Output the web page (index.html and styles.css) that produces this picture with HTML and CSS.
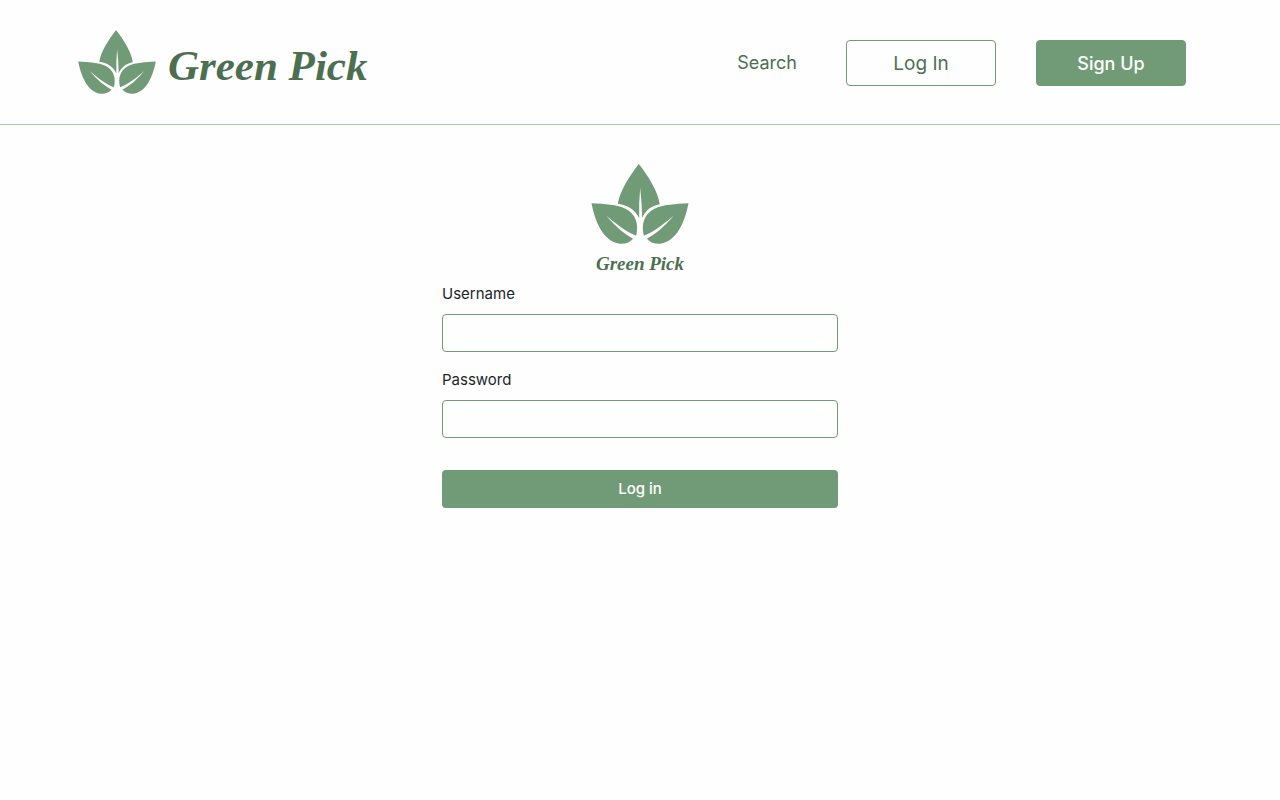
FILE: index.html
```html
<!DOCTYPE html>
<html lang="en">
<head>
<meta charset="utf-8">
<meta name="viewport" content="width=device-width, initial-scale=1">
<title>Green Pick</title>
<link rel="stylesheet" href="styles.css">
</head>
<body>
<svg class="symbols" aria-hidden="true">
  <symbol id="leaves" viewBox="36 26 291 240">
    <path d="M178 26C150 62 122 105 115 145C145 149 167 163 179 188Q178 140 182 98Q187 140 188 188C198 165 215 152 241 147C234 105 206 62 178 26Z"/>
    <path d="M36 144C75 146 113 148 138 160C168 175 179 205 170 241C140 230 112 208 79 180C106 212 134 236 161 250C150 262 136 266 122 265C80 262 50 215 36 144Z"/>
    <path d="M327 144C288 146 250 148 225 160C195 175 184 205 193 241C223 230 251 208 284 180C257 212 229 236 202 250C213 262 227 266 241 265C283 262 313 215 327 144Z"/>
  </symbol>
</svg>
<header class="header">
  <a class="brand" href="#">
    <svg class="brand-leaves" aria-hidden="true"><use href="#leaves"/></svg>
    <span class="brand-name">Green Pick</span>
  </a>
  <nav class="nav">
    <a class="nav-link" href="#">Search</a>
    <button class="button button-outline" type="button">Log In</button>
    <button class="button button-solid" type="button">Sign Up</button>
  </nav>
</header>
<main class="main">
  <form class="login">
    <div class="login-logo">
      <svg class="login-leaves" aria-hidden="true"><use href="#leaves"/></svg>
      <span class="login-name">Green Pick</span>
    </div>
    <label class="label" for="username">Username</label>
    <input class="input" id="username" type="text">
    <label class="label" for="password">Password</label>
    <input class="input" id="password" type="password">
    <button class="submit" type="submit">Log in</button>
  </form>
</main>
</body>
</html>
```
FILE: styles.css
```css
* {
  box-sizing: border-box;
}

body {
  margin: 0;
  background: #fefefe;
  color: #212529;
  font: 15px/24px Inter, "Liberation Sans", sans-serif;
}

.symbols {
  display: none;
}

.header {
  display: flex;
  align-items: center;
  justify-content: space-between;
  padding: 30px 94px 30px 78px;
  border-bottom: 1px solid #a6cfa3;
}

.brand {
  display: flex;
  align-items: center;
  gap: 12px;
  color: #4c6f50;
  text-decoration: none;
}

.brand-leaves {
  width: 78px;
  height: 64px;
  fill: #719b76;
}

.brand-name,
.login-name {
  font-family: "Liberation Serif", cursive;
  font-style: italic;
  font-weight: 700;
  white-space: nowrap;
}

.brand-name {
  padding-top: 8px;
  font-size: 43px;
  line-height: 56px;
}

.nav {
  display: flex;
  align-items: center;
  gap: 40px;
  padding-top: 2px;
}

.nav-link {
  margin-right: 9px;
  color: #4c6f50;
  font-size: 18px;
  text-decoration: none;
}

.button {
  width: 150px;
  height: 46px;
  border: 1px solid #719b76;
  border-radius: 4px;
  font-family: inherit;
  font-size: 19px;
}

.button-outline {
  background: #fefefe;
  color: #4c6f50;
}

.button-solid {
  background: #719b76;
  color: #fff;
  font-size: 18px;
  font-weight: 500;
}

.main {
  display: flex;
  justify-content: center;
  padding: 39px 16px;
}

.login {
  display: flex;
  flex-direction: column;
  width: 100%;
  max-width: 396px;
}

.login-logo {
  display: flex;
  flex-direction: column;
  align-items: center;
  gap: 8px;
  margin-bottom: 6px;
  color: #4c6f50;
}

.login-leaves {
  width: 98px;
  height: 80px;
  fill: #719b76;
}

.login-name {
  font-size: 19px;
  line-height: 24px;
}

.label {
  margin-bottom: 8px;
}

.input {
  height: 38px;
  margin-bottom: 16px;
  padding: 6px 12px;
  border: 1px solid #719b76;
  border-radius: 4px;
  background: #fefefe;
  color: inherit;
  font: inherit;
}

.submit {
  height: 38px;
  margin-top: 16px;
  border: 0;
  border-radius: 4px;
  background: #719b76;
  color: #fff;
  font: inherit;
  font-weight: 500;
}
```
